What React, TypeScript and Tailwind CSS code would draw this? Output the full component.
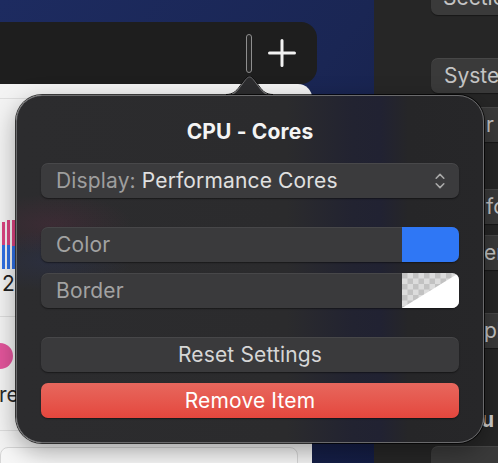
import React from "react";

function PlusIcon() {
  return (
    <svg width="28" height="28" viewBox="0 0 28 28" fill="none">
      <path d="M14 1.5V26.5M1.5 14H26.5" stroke="#f2f2f2" strokeWidth="3" strokeLinecap="round" />
    </svg>
  );
}

function UpDownChevrons() {
  return (
    <svg width="10" height="16" viewBox="0 0 10 16" fill="none">
      <path d="M1.2 5.2L5 1.4L8.8 5.2" stroke="#a9a9a9" strokeWidth="1.6" strokeLinecap="round" strokeLinejoin="round" />
      <path d="M1.2 10.8L5 14.6L8.8 10.8" stroke="#a9a9a9" strokeWidth="1.6" strokeLinecap="round" strokeLinejoin="round" />
    </svg>
  );
}

function TransparentSwatch() {
  return (
    <svg width="57" height="35" viewBox="0 0 57 35" preserveAspectRatio="none" className="block">
      <defs>
        <pattern id="checker" width="11" height="11" patternUnits="userSpaceOnUse">
          <rect width="11" height="11" fill="#dcdcdc" />
          <rect width="5.5" height="5.5" fill="#c2c2c2" />
          <rect x="5.5" y="5.5" width="5.5" height="5.5" fill="#c2c2c2" />
        </pattern>
      </defs>
      <rect width="57" height="35" fill="url(#checker)" />
      <polygon points="0,35 57,0 57,35" fill="#ffffff" />
    </svg>
  );
}

function PopoverArrow() {
  const edge = "M0 19.5 C6 19.5 10 17 14 11 L19.5 3.8 C21.2 1.7 22.3 1 23.5 1 C24.7 1 25.8 1.7 27.5 3.8 L33 11 C37 17 41 19.5 47 19.5";
  return (
    <svg
      width="47"
      height="22"
      viewBox="0 0 47 22"
      className="absolute left-[226px] top-[76px]"
      fill="none"
    >
      <path d={edge + " L47 22 L0 22 Z"} fill="#2c2c2e" />
      <path d={edge} stroke="#0c0c0c" strokeWidth="1" transform="translate(0,-1)" />
      <path d={edge} stroke="#6a6a6c" strokeWidth="1" />
    </svg>
  );
}

function SideButton({ label, className }: { label: string; className: string }) {
  return (
    <div
      className={
        "h-[35px] w-[90px] shrink-0 rounded-[7px] bg-[#3a3a3a] shadow-[inset_0_1px_0_rgba(255,255,255,0.07),0_1px_1px_rgba(0,0,0,0.4)] flex items-center text-[21px] text-[#c4c4c4] whitespace-nowrap overflow-hidden " +
        className
      }
    >
      {label}
    </div>
  );
}

const control =
  "h-[35px] rounded-[7px] bg-[#3a3a3c] shadow-[inset_0_1px_0_rgba(255,255,255,0.07),0_1px_1.5px_rgba(0,0,0,0.45)]";

export default function App() {
  return (
    <div className="relative w-[498px] h-[463px] overflow-hidden flex font-['Inter','Noto_Sans',sans-serif]">
      {/* window area on the left: toolbar and sheet over the desktop */}
      <div className="w-[374px] shrink-0 flex flex-col bg-gradient-to-br from-[#1d2b60] via-[#1a2654] to-[#141d44]">
        <div className="h-[22px] shrink-0" />
        <div className="w-[317px] h-[62px] shrink-0 bg-[#1e1e1e] rounded-r-[16px] flex items-center justify-end pr-[21px] gap-[16px]">
          <div className="w-[6px] h-[39px] rounded-full border border-[#8e8e8e] bg-[#262626]" />
          <PlusIcon />
        </div>
        <div className="w-[312px] flex-1 bg-[#f3f3f3] rounded-tr-[14px] flex flex-col">
          <div className="h-[15px] shrink-0 border-b border-[#dedede]" />
          <div className="flex-1 flex flex-col pl-[2px]">
            <div className="h-[120px] shrink-0" />
            <div className="flex items-end gap-[2px] h-[50px]">
              <div className="w-[3px] h-[47px] flex flex-col">
                <div className="h-[23px] bg-[#d9437f]" />
                <div className="flex-1 bg-[#2f6fe3]" />
              </div>
              <div className="w-[3px] h-[49px] flex flex-col">
                <div className="h-[25px] bg-[#d9437f]" />
                <div className="flex-1 bg-[#2f6fe3]" />
              </div>
              <div className="w-[3px] h-[49px] flex flex-col">
                <div className="h-[26px] bg-[#d9437f]" />
                <div className="flex-1 bg-[#2f6fe3]" />
              </div>
            </div>
            <div className="text-[21px] leading-[26px] text-[#1f1f1f] mt-[2px]">2</div>
            <div className="h-[20px] shrink-0 border-b border-[#dcdcdc] ml-[-2px]" />
            <div className="w-[26px] h-[26px] rounded-full bg-[#e2559b] ml-[-15px] mt-[26px]" />
            <div className="text-[21px] leading-[24px] text-[#2a2a2a] ml-[-3px] mt-[14px]">re</div>
            <div className="h-[24px] shrink-0 border-b border-[#dcdcdc] ml-[-2px]" />
            <div className="mt-[16px] h-[30px] w-[298px] ml-[-2px] rounded-t-[8px] border border-[#d6d6d6] bg-[#f7f7f7]" />
          </div>
        </div>
      </div>

      {/* inspector column on the right */}
      <div className="flex-1 bg-[#262626] flex flex-col pl-[57px]">
        <SideButton label="Sectio" className="mt-[-20px] pl-[12px]" />
        <SideButton label="Syste" className="mt-[43px] pl-[13px]" />
        <SideButton label="r" className="mt-[14px] pl-[55px]" />
        <SideButton label="fo" className="mt-[47px] pl-[55px]" />
        <SideButton label="er" className="mt-[11px] pl-[53px]" />
        <SideButton label="ph" className="mt-[43px] pl-[53px]" />
        <div className="mt-[60px] h-[24px] leading-[24px] pl-[50px] text-[21px] font-bold text-[#cfcfcf]">u</div>
        <SideButton label="" className="mt-[14px]" />
      </div>

      {/* popover */}
      <PopoverArrow />
      <div className="absolute left-[16px] top-[95px] w-[468px] h-[348px] rounded-[26px] border border-[#6a6a6c] shadow-[0_0_0_1px_rgba(0,0,0,0.75),0_8px_24px_rgba(0,0,0,0.35)] bg-[radial-gradient(ellipse_80px_30px_at_35px_128px,rgba(130,40,80,0.18),transparent),radial-gradient(ellipse_80px_30px_at_35px_165px,rgba(40,60,140,0.18),transparent),linear-gradient(90deg,#2c2c2e_0%,#2b2b2d_58%,#222331_72%,#212232_78%,#262628_84%,#272729_100%)] px-[24px] pt-[24px] flex flex-col tracking-[0.15px]">
        <div className="h-[24px] leading-[24px] text-center text-[21px] font-bold text-[#f4f4f4]">CPU - Cores</div>

        <div className={control + " mt-[19px] bg-[#3b3b3d] flex items-center pl-[15px] pr-[14px] text-[21px]"}>
          <span className="text-[#9e9e9e]">Display:</span>
          <span className="ml-[6px] text-[#e0e0e0]">Performance Cores</span>
          <span className="ml-auto flex items-center">
            <UpDownChevrons />
          </span>
        </div>

        <div className={control + " mt-[29px] flex overflow-hidden"}>
          <div className="flex-1 flex items-center pl-[15px] text-[21px] text-[#a2a2a2]">Color</div>
          <div className="w-[57px] bg-[#2f77f5]" />
        </div>

        <div className={control + " mt-[11px] flex overflow-hidden"}>
          <div className="flex-1 flex items-center pl-[15px] text-[21px] text-[#a2a2a2]">Border</div>
          <div className="w-[57px]">
            <TransparentSwatch />
          </div>
        </div>

        <div className={control + " mt-[29px] flex items-center justify-center text-[21px] text-[#d6d6d6]"}>
          Reset Settings
        </div>

        <div className="mt-[11px] h-[35px] rounded-[7px] bg-gradient-to-b from-[#e7675d] to-[#e4463d] shadow-[0_1px_1.5px_rgba(0,0,0,0.45)] flex items-center justify-center text-[21px] text-white">
          Remove Item
        </div>
      </div>
    </div>
  );
}
